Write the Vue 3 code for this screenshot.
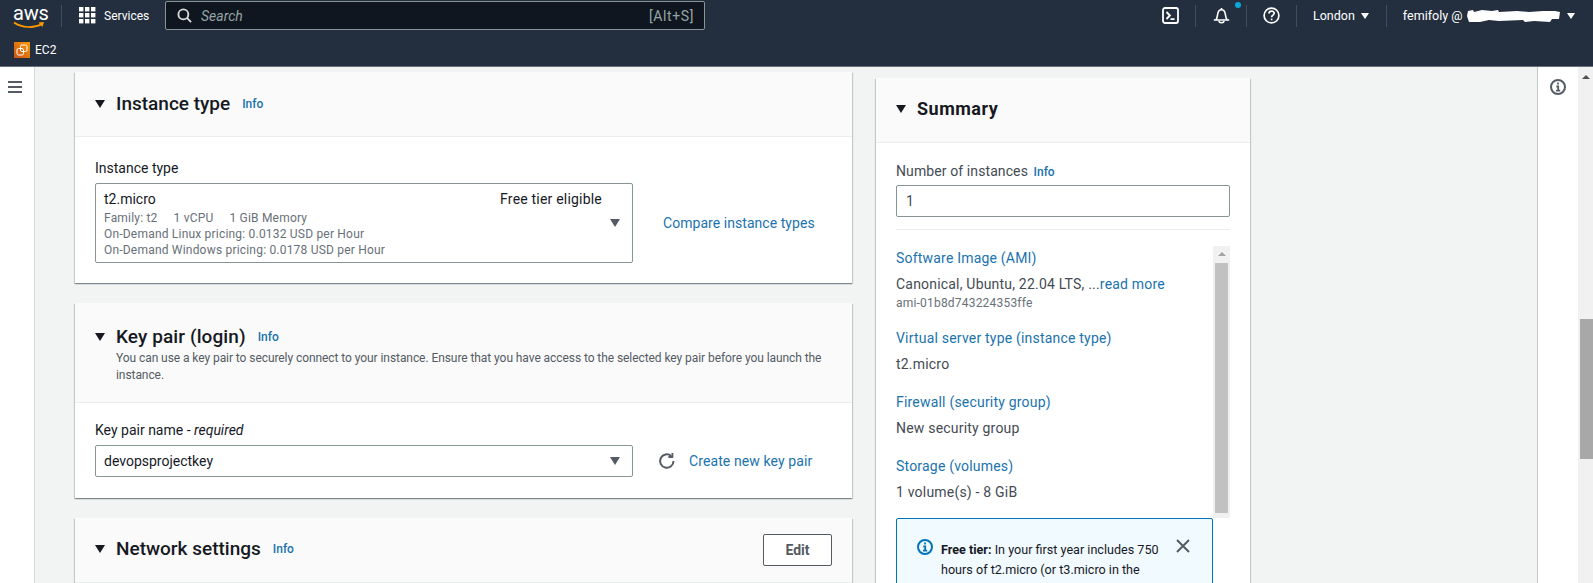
<template>
  <div class="page">
    <header class="topbar">
      <div class="nav-row">
        <div class="aws-logo">
          <span class="aws-word">aws</span>
          <svg class="aws-smile" width="32" height="8" viewBox="0 0 32 8">
            <path d="M1 1.5C9 7 21 7.5 29 3" fill="none" stroke="#f90" stroke-width="1.7" />
            <path d="M25.5 1.4L31 1l-1.6 5z" fill="#f90" />
          </svg>
        </div>
        <span class="nav-sep sep-logo"></span>
        <svg class="grid-icon" width="17" height="17" viewBox="0 0 17 17" fill="#fff">
          <template v-for="row in [0, 6, 12]" :key="row">
            <rect v-for="col in [0, 6, 12]" :key="col" :x="col" :y="row" width="4.4" height="4.4" />
          </template>
        </svg>
        <span class="services">Services</span>
        <div class="search">
          <svg width="15" height="15" viewBox="0 0 16 16" fill="none" stroke="#d5dbdb" stroke-width="2">
            <circle cx="6.8" cy="6.8" r="5.3" />
            <path d="M10.6 10.6L15 15" />
          </svg>
          <span class="search-text">Search</span>
          <span class="search-key">[Alt+S]</span>
        </div>
        <div class="nav-right">
          <svg class="nav-icon" width="17" height="17" viewBox="0 0 17 17" fill="none" stroke="#fff" stroke-width="1.8">
            <rect x="1" y="1" width="15" height="15" rx="2" />
            <path d="M4.5 5l3.4 3.5-3.4 3.5M8.5 12.2h4" />
          </svg>
          <span class="nav-sep"></span>
          <div class="bell">
            <svg class="nav-icon" width="17" height="17" viewBox="0 0 17 17" fill="none" stroke="#fff" stroke-width="1.6">
              <path d="M.8 13h15.4M2.8 13c1.6-2 1.4-4 2-6.500C5.300 4 6.800 2.700 8.500 2.700s3.200 1.300 3.700 3.800c.6 2.500.4 4.500 2 6.500" />
              <path d="M8.500 1v1.700M6 14c.3 2.400 4.700 2.400 5 0" />
            </svg>
            <span class="bell-dot"></span>
          </div>
          <span class="nav-sep"></span>
          <svg class="nav-icon" width="17" height="17" viewBox="0 0 17 17" fill="none" stroke="#fff" stroke-width="1.7">
            <circle cx="8.500" cy="8.500" r="7.400" />
            <path d="M6 6.500c0-3.200 5.200-3.200 5.200-.2 0 1.900-2.600 1.900-2.600 4" />
            <path d="M8.600 11.600v1.700" />
          </svg>
          <span class="nav-sep"></span>
          <span class="nav-text region">London</span>
          <span class="caret"></span>
          <span class="nav-sep sep-user"></span>
          <span class="nav-text">femifoly @</span>
          <svg class="redacted" width="94" height="14" viewBox="0 0 94 14">
            <path d="M1 2l5-1 1 2 8-2 10 1 6-1 1 2 18-1 12 1 14-1 12 0 5 1-1 7-7 0-2 3-16-1-9 1-2-2-24 1-10-1-9 2-11 0-2-6z" fill="#fff" />
          </svg>
          <span class="caret caret-user"></span>
        </div>
      </div>
      <div class="service-row">
        <svg width="16" height="16" viewBox="0 0 16 16">
          <defs>
            <linearGradient id="ec2-fill" x1="0" y1="1" x2="1" y2="0">
              <stop offset="0" stop-color="#c8511b" />
              <stop offset="1" stop-color="#f90" />
            </linearGradient>
          </defs>
          <rect width="16" height="16" fill="url(#ec2-fill)" />
          <g fill="none" stroke="#fff" stroke-width="1">
            <rect x="6.500" y="3" width="6.500" height="6.500" rx="1.500" />
            <rect x="3" y="6.500" width="6.500" height="6.500" rx="1.500" />
          </g>
        </svg>
        <span class="service-name">EC2</span>
      </div>
    </header>

    <div class="layout">
      <aside class="side-left">
        <svg width="14" height="12" viewBox="0 0 14 12" fill="#545b64">
          <rect width="14" height="2" />
          <rect y="5" width="14" height="2" />
          <rect y="10" width="14" height="2" />
        </svg>
      </aside>

      <main class="content">
        <div class="form-col">
          <section class="card">
            <div class="card-head head-plain">
              <span class="tri"></span>
              <h2>Instance type</h2>
              <a class="info">Info</a>
            </div>
            <div class="card-body">
              <label>Instance type</label>
              <div class="field-row">
                <div class="select select-tall">
                  <div class="select-top">
                    <span>t2.micro</span>
                    <span class="tier">Free tier eligible</span>
                  </div>
                  <p class="select-line specs">
                    <span v-for="spec in instanceSpecs" :key="spec">{{ spec }}</span>
                  </p>
                  <p v-for="line in instancePricing" :key="line" class="select-line">{{ line }}</p>
                  <span class="select-arrow"></span>
                </div>
                <a class="side-link compare">Compare instance types</a>
              </div>
            </div>
          </section>

          <section class="card">
            <div class="card-head head-key">
              <div class="head-line">
                <span class="tri"></span>
                <h2>Key pair (login)</h2>
                <a class="info">Info</a>
              </div>
              <p class="head-desc">
                You can use a key pair to securely connect to your instance. Ensure that you have access to the selected key pair before you launch the instance.
              </p>
            </div>
            <div class="card-body key-body">
              <label>Key pair name - <em>required</em></label>
              <div class="field-row">
                <div class="select">
                  <span>devopsprojectkey</span>
                  <span class="select-arrow"></span>
                </div>
                <svg class="refresh" width="18" height="18" viewBox="0 0 18 18" fill="none" stroke="#545b64" stroke-width="2">
                  <path d="M15.500 9a6.700 6.700 0 1 1-2.300-5" />
                  <path d="M14.400 1v4h-4" stroke-width="1.800" />
                </svg>
                <a class="side-link">Create new key pair</a>
              </div>
            </div>
          </section>

          <section class="card">
            <div class="card-head head-plain head-net">
              <span class="tri"></span>
              <h2>Network settings</h2>
              <a class="info">Info</a>
              <button class="edit-btn">Edit</button>
            </div>
          </section>
        </div>

        <section class="card summary">
          <div class="card-head head-plain head-summary">
            <span class="tri"></span>
            <h2>Summary</h2>
          </div>
          <div class="summary-body">
            <label class="summary-label">Number of instances <a class="info">Info</a></label>
            <div class="count-input">1</div>
            <hr />
            <div class="summary-scroll">
              <div class="summary-items">
                <div v-for="item in summaryItems" :key="item.title" class="summary-item">
                  <a class="item-title">{{ item.title }}</a>
                  <p class="item-value">{{ item.value }}<a v-if="item.more" class="item-more">read more</a></p>
                  <p v-if="item.sub" class="item-sub">{{ item.sub }}</p>
                </div>
                <div class="free-box">
                  <svg class="free-icon" width="16" height="16" viewBox="0 0 16 16" fill="none" stroke="#0073bb" stroke-width="2">
                    <circle cx="8" cy="8" r="7" />
                    <path d="M8 3.600v2M6.300 7.500H8.200v4M6 11.700h4.200" stroke-width="1.800" />
                  </svg>
                  <p class="free-text"><b>Free tier:</b> In your first year includes 750 hours of t2.micro (or t3.micro in the</p>
                  <svg class="free-close" width="14" height="14" viewBox="0 0 14 14" stroke="#545b64" stroke-width="2">
                    <path d="M1 1l12 12M13 1L1 13" />
                  </svg>
                </div>
              </div>
              <div class="inner-track">
                <span class="arrow-up"></span>
                <span class="inner-thumb"></span>
              </div>
            </div>
          </div>
        </section>
      </main>

      <aside class="side-right">
        <svg width="16" height="16" viewBox="0 0 16 16" fill="none" stroke="#545b64" stroke-width="2">
          <circle cx="8" cy="8" r="7" />
          <path d="M8 3.600v2M6.300 7.500H8.200v4M6 11.700h4.200" stroke-width="1.800" />
        </svg>
      </aside>

      <div class="page-track">
        <span class="arrow-up"></span>
        <span class="page-thumb"></span>
      </div>
    </div>
  </div>
</template>

<script setup>
const instanceSpecs = ["Family: t2", "1 vCPU", "1 GiB Memory"];

const instancePricing = [
  "On-Demand Linux pricing: 0.0132 USD per Hour",
  "On-Demand Windows pricing: 0.0178 USD per Hour",
];

const summaryItems = [
  {
    title: "Software Image (AMI)",
    value: "Canonical, Ubuntu, 22.04 LTS, ...",
    more: true,
    sub: "ami-01b8d743224353ffe",
  },
  { title: "Virtual server type (instance type)", value: "t2.micro" },
  { title: "Firewall (security group)", value: "New security group" },
  { title: "Storage (volumes)", value: "1 volume(s) - 8 GiB" },
];
</script>

<style>
body {
  background: #f2f3f3;
}
</style>

<style scoped>
.page {
  width: 1593px;
  height: 583px;
  overflow: hidden;
  font-family: Roboto, "Liberation Sans", sans-serif;
  font-size: 14px;
  color: #16191f;
}

/* top bar */
.topbar {
  height: 66px;
  background: #232f3e;
  border-bottom: 1px solid #687078;
  color: #fff;
}
.nav-row {
  display: flex;
  align-items: center;
  height: 31px;
  padding-left: 13px;
}
.aws-logo {
  position: relative;
  width: 32px;
  height: 26px;
  margin-top: 2px;
}
.aws-word {
  display: block;
  font-size: 20px;
  line-height: 18px;
  letter-spacing: -0.2px;
  text-align: center;
}
.aws-smile {
  position: absolute;
  left: 0;
  top: 17px;
}
.nav-sep {
  width: 1px;
  height: 22px;
  background: #414d5c;
}
.sep-logo {
  margin-left: 16px;
}
.grid-icon {
  margin-left: 17px;
}
.services {
  margin-left: 8px;
  font-size: 12px;
  width: 61px;
}
.search {
  display: flex;
  align-items: center;
  width: 540px;
  height: 29px;
  padding: 0 10px 0 11px;
  box-sizing: border-box;
  background: #10161f;
  border: 1px solid #879596;
  border-radius: 2px;
}
.search-text {
  margin-left: 9px;
  font-style: italic;
  color: #95a5a6;
  font-size: 14px;
}
.search-key {
  margin-left: auto;
  color: #95a5a6;
  font-size: 14px;
  letter-spacing: 0.6px;
}
.nav-right {
  display: flex;
  align-items: center;
  margin-left: 457px;
  gap: 16px;
}
.bell {
  position: relative;
  height: 17px;
  margin-left: 1px;
}
.bell-dot {
  position: absolute;
  left: 22px;
  top: -5px;
  width: 6px;
  height: 6px;
  border-radius: 50%;
  background: #0da5d9;
}
.nav-text {
  font-size: 12.500px;
  white-space: nowrap;
}
.caret {
  width: 0;
  height: 0;
  margin-left: -10px;
  border-left: 4.500px solid transparent;
  border-right: 4.500px solid transparent;
  border-top: 6px solid #fff;
}
.sep-user {
  margin-left: 1px;
}
.redacted {
  margin-left: -11px;
}
.caret-user {
  margin-left: -10px;
}
.service-row {
  display: flex;
  align-items: center;
  gap: 5px;
  height: 35px;
  padding: 2px 0 0 14px;
  box-sizing: border-box;
}
.service-name {
  font-size: 12px;
}

/* page frame */
.layout {
  display: flex;
  height: 516px;
  overflow: hidden;
}
.side-left {
  flex: none;
  width: 35px;
  padding: 14px 0 0 8px;
  box-sizing: border-box;
  background: #fff;
  border-right: 1px solid #d5dbdb;
}
.side-left svg {
  display: block;
}
.content {
  flex: none;
  display: flex;
  align-items: flex-start;
  gap: 24px;
  width: 1502px;
  padding: 5px 0 0 40px;
  box-sizing: border-box;
}
.form-col {
  flex: none;
  display: flex;
  flex-direction: column;
  gap: 20px;
  width: 777px;
}
.side-right {
  flex: none;
  width: 41px;
  padding-top: 12px;
  box-sizing: border-box;
  background: #fff;
  border-left: 1px solid #c6c9ca;
}
.side-right svg {
  display: block;
  margin-left: 12px;
}
.page-track {
  position: relative;
  flex: none;
  width: 15px;
  background: #f1f1f1;
}
.page-track .arrow-up {
  position: absolute;
  left: 4px;
  top: 8px;
}
.page-thumb {
  position: absolute;
  left: 2px;
  right: 0;
  top: 252px;
  height: 140px;
  background: #a8a8a8;
}
.arrow-up {
  width: 0;
  height: 0;
  border-left: 4px solid transparent;
  border-right: 4px solid transparent;
  border-bottom: 4px solid #505050;
}

/* cards */
.card {
  background: #fff;
  box-shadow: 0 1px 1px 0 rgba(0, 28, 36, 0.3), 1px 1px 1px 0 rgba(0, 28, 36, 0.15), -1px 1px 1px 0 rgba(0, 28, 36, 0.15);
}
.card-head {
  background: #fafafa;
  border-bottom: 1px solid #eaeded;
}
.head-plain,
.head-line {
  display: flex;
  align-items: center;
}
.head-plain {
  height: 65px;
  padding: 0 20px 1px;
  box-sizing: border-box;
}
.head-key {
  height: 100px;
  padding: 23px 20px 0;
  box-sizing: border-box;
}
.head-net {
  padding-bottom: 0;
}
.head-net h2,
.head-net .tri,
.head-net .info {
  margin-bottom: 2px;
}
.tri {
  flex: none;
  width: 0;
  height: 0;
  margin-right: 11px;
  border-left: 5.500px solid transparent;
  border-right: 5.500px solid transparent;
  border-top: 8px solid #16191f;
}
h2 {
  margin: 0;
  font-size: 19px;
  line-height: 22px;
  font-weight: 500;
}
.info {
  margin-left: 12px;
  font-size: 12px;
  font-weight: 500;
  color: #1a73ad;
}
.head-line h2 {
  letter-spacing: 0.1px;
}
.head-desc {
  margin: 2px 0 0 21px;
  font-size: 12px;
  line-height: 17px;
  letter-spacing: -0.07px;
  color: #545b64;
}
.card-body {
  padding: 20px 20px 20px;
}
.key-body {
  padding: 16px 20px 21px;
}
label {
  display: block;
  font-size: 14px;
  line-height: 22px;
}
.field-row {
  display: flex;
  align-items: center;
  margin-top: 4px;
}
.select {
  position: relative;
  flex: none;
  width: 538px;
  height: 32px;
  padding: 0 8px;
  box-sizing: border-box;
  display: flex;
  align-items: center;
  background: #fff;
  border: 1px solid #879596;
  border-radius: 2px;
}
.select-tall {
  display: block;
  height: 80px;
  padding-top: 6px;
}
.select-top {
  display: flex;
  justify-content: space-between;
  padding-right: 22px;
  line-height: 18px;
  margin-bottom: 2px;
}
.tier {
  letter-spacing: 0.2px;
}
.select-line {
  margin: 0;
  font-size: 12px;
  line-height: 16px;
  letter-spacing: 0.2px;
  color: #687078;
}
.specs {
  display: flex;
  gap: 16px;
}
.select-arrow {
  position: absolute;
  right: 12px;
  top: 50%;
  margin-top: -4px;
  width: 0;
  height: 0;
  border-left: 5.500px solid transparent;
  border-right: 5.500px solid transparent;
  border-top: 8px solid #545b64;
}
.side-link {
  color: #1a73ad;
  white-space: nowrap;
  letter-spacing: 0.1px;
}
.compare {
  margin-left: 30px;
  letter-spacing: 0.05px;
}
.refresh {
  flex: none;
  margin: 0 13px 0 25px;
}
.edit-btn {
  width: 69px;
  height: 32px;
  margin-left: auto;
  padding: 0;
  font-family: inherit;
  font-size: 14px;
  font-weight: 700;
  color: #545b64;
  background: #fff;
  border: 1px solid #545b64;
  border-radius: 2px;
}

/* summary */
.summary {
  flex: none;
  width: 374px;
  height: 520px;
  margin-top: 6px;
}
.head-summary {
  padding-bottom: 3px;
}
.head-summary h2 {
  font-size: 18px;
  font-weight: 700;
  letter-spacing: 0.5px;
}
.summary-body {
  padding: 17px 20px 0;
  color: #444b54;
  letter-spacing: 0.2px;
}
.summary-label {
  letter-spacing: 0.1px;
}
.summary-label .info {
  margin-left: 2px;
  letter-spacing: 0;
}
.count-input {
  height: 32px;
  margin-top: 2px;
  padding: 0 9px;
  box-sizing: border-box;
  line-height: 30px;
  border: 1px solid #879596;
  border-radius: 2px;
}
hr {
  margin: 12px 0 16px;
  border: 0;
  border-top: 1px solid #eaeded;
}
.summary-scroll {
  display: flex;
  align-items: flex-start;
}
.summary-items {
  flex: none;
  width: 317px;
  padding-top: 1px;
}
.summary-item {
  margin-bottom: 16px;
}
.summary-item:nth-last-child(2) {
  margin-bottom: 15px;
}
.item-title {
  display: block;
  line-height: 22px;
  color: #1a73ad;
}
.item-value {
  margin: 4px 0 0;
  line-height: 22px;
}
.item-more {
  color: #1a73ad;
}
.item-sub {
  margin: 0;
  font-size: 12px;
  line-height: 16px;
  color: #687078;
}
.free-box {
  display: flex;
  align-items: flex-start;
  padding: 19px 20px 20px;
  background: #f1faff;
  border: 1px solid #0073bb;
  border-radius: 2px;
  box-sizing: border-box;
}
.free-icon {
  flex: none;
  margin: 1px 8px 0 0;
}
.free-text {
  margin: 2px 0 0;
  width: 221px;
  flex: none;
  font-size: 12.600px;
  line-height: 20px;
  letter-spacing: 0;
  color: #16191f;
}
.free-close {
  flex: none;
  margin: 1px 0 0 14px;
}
.inner-track {
  position: relative;
  flex: none;
  width: 17px;
  height: 272px;
  background: #f1f1f1;
}
.inner-track .arrow-up {
  position: absolute;
  left: 5px;
  top: 6px;
  border-bottom-color: #a3a3a3;
}
.inner-thumb {
  position: absolute;
  left: 2px;
  right: 2px;
  top: 17px;
  height: 250px;
  background: #c1c1c1;
}
</style>
